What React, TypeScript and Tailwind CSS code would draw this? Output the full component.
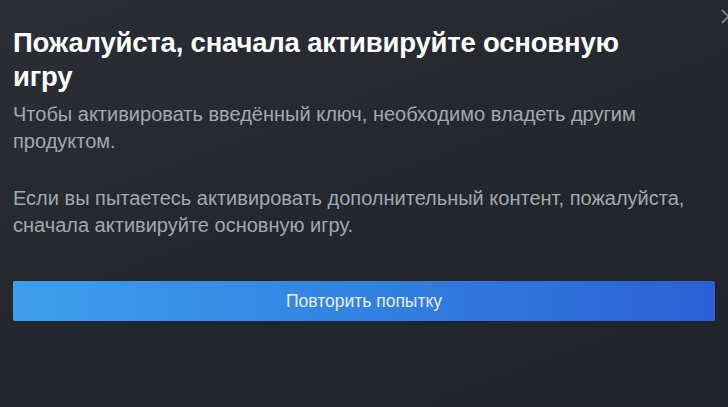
export default function App() {
  return (
    <div className="relative h-[407px] w-[728px] overflow-hidden bg-[linear-gradient(160deg,#2b2e35_0%,#23262c_60%,#202328_100%)] font-['Liberation_Sans',Arial,sans-serif]">
      <svg className="absolute left-[721px] top-[9px]" width="15" height="15" viewBox="0 0 15 15" fill="none">
        <path d="M1 1L14 14M14 1L1 14" stroke="#767b84" strokeWidth="2" />
      </svg>
      <div className="flex flex-col px-[13px] pt-[26px]">
        <h1 className="pr-[60px] text-[27.5px] font-bold leading-[34px] tracking-[-0.2px] text-white">
          Пожалуйста, сначала активируйте основную игру
        </h1>
        <div className="mt-[7px] text-[20px] leading-[27px] text-[#a3a8b1]">
          <p>Чтобы активировать введённый ключ, необходимо владеть другим продуктом.</p>
          <p className="mt-[30px]">
            Если вы пытаетесь активировать дополнительный контент, пожалуйста, сначала активируйте основную игру.
          </p>
        </div>
        <button className="mt-[42px] flex h-[40px] w-full items-center justify-center rounded-[2px] bg-[linear-gradient(to_right,#3e9eee_0%,#3488e4_40%,#2b60d4_100%)] text-[17.5px] text-[#e8eef8]">
          Повторить попытку
        </button>
      </div>
    </div>
  );
}
